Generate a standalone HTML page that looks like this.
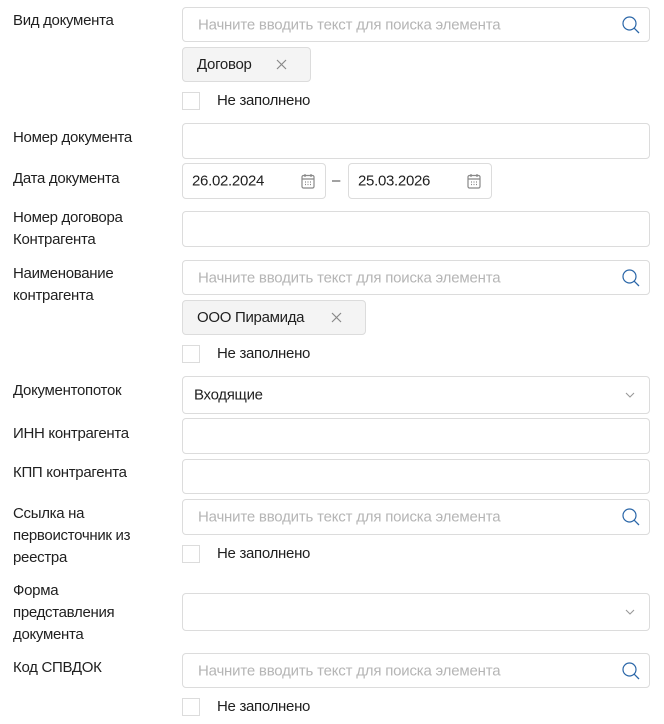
<!DOCTYPE html>
<html><head><meta charset="utf-8"><style>
body{margin:0;width:664px;height:724px;background:#fff;position:relative;overflow:hidden;font-family:"Liberation Sans","DejaVu Sans",sans-serif;color:#1f1f1f;font-size:15px}
.l{position:absolute;left:13px;line-height:22px;letter-spacing:-0.3px}
.b{position:absolute;left:182px;width:466px;border:1px solid #dcdcdc;border-radius:4px;background:#fff}
.ph{position:absolute;left:15px;top:50%;transform:translateY(-50%);color:#b5b5b5;font-size:15px;letter-spacing:-0.2px;white-space:nowrap}
.ic{position:absolute;right:8px;top:50%;transform:translateY(-50%)}
.chip{position:absolute;left:182px;height:33px;border:1px solid #dcdcdc;border-radius:4px;background:#f4f4f4;line-height:33px;padding-left:14px;letter-spacing:-0.3px}
.chip svg{position:absolute;right:23px;top:11px}
.cb{position:absolute;left:182px;width:16px;height:16px;border:1px solid #dcdcdc;background:#fff}
.ct{position:absolute;left:217px;line-height:18px;letter-spacing:-0.3px}
.v{position:absolute;left:9px;top:50%;transform:translateY(-50%);letter-spacing:-0.3px}
</style></head><body>
<svg width="0" height="0" style="position:absolute"><defs>
<symbol id="s" viewBox="0 0 20 20"><circle cx="8.5" cy="8.5" r="6.5" fill="none" stroke="#2a66a8" stroke-width="1.2"/><path d="M13.2 13.2L18 18" stroke="#2a66a8" stroke-width="1.3"/></symbol>
<symbol id="c" viewBox="0 0 14 16"><rect x="1" y="2.5" width="12" height="12.5" rx="1.5" fill="none" stroke="#888" stroke-width="1.2"/><path d="M4 1v3M10 1v3M1 6h12" stroke="#888" stroke-width="1.2"/><path d="M4 9h1M6.5 9h1M9 9h1M4 11.5h1M6.5 11.5h1M9 11.5h1" stroke="#888" stroke-width="1.2"/></symbol>
<symbol id="d" viewBox="0 0 10 6"><path d="M1 1l4 4 4-4" fill="none" stroke="#999" stroke-width="1.1"/></symbol>
<symbol id="x" viewBox="0 0 11 11"><path d="M1 1l9 9M10 1l-9 9" stroke="#888" stroke-width="1.2"/></symbol>
</defs></svg>

<div class="l" style="top:10px">Вид документа</div>
<div class="b" style="top:7px;height:33px"><div class="ph">Начните вводить текст для поиска элемента</div><svg class="ic" width="20" height="20"><use href="#s"/></svg></div>
<div class="chip" style="top:47px;width:113px">Договор<svg width="11" height="11"><use href="#x"/></svg></div>
<div class="cb" style="top:92px"></div><div class="ct" style="top:92px">Не заполнено</div>

<div class="l" style="top:127px">Номер документа</div>
<div class="b" style="top:123px;height:34px"></div>

<div class="l" style="top:168px">Дата документа</div>
<div class="b" style="top:163px;height:34px;width:142px"><div class="v">26.02.2024</div><svg class="ic" style="right:10px" width="14" height="16"><use href="#c"/></svg></div>
<div style="position:absolute;left:332px;top:172px;color:#444">–</div>
<div class="b" style="top:163px;height:34px;width:142px;left:348px"><div class="v">25.03.2026</div><svg class="ic" style="right:10px" width="14" height="16"><use href="#c"/></svg></div>

<div class="l" style="top:207px">Номер договора<br>Контрагента</div>
<div class="b" style="top:211px;height:34px"></div>

<div class="l" style="top:263px">Наименование<br>контрагента</div>
<div class="b" style="top:260px;height:33px"><div class="ph">Начните вводить текст для поиска элемента</div><svg class="ic" width="20" height="20"><use href="#s"/></svg></div>
<div class="chip" style="top:300px;width:168px">ООО Пирамида<svg width="11" height="11"><use href="#x"/></svg></div>
<div class="cb" style="top:345px"></div><div class="ct" style="top:345px">Не заполнено</div>

<div class="l" style="top:380px">Документопоток</div>
<div class="b" style="top:376px;height:36px"><div class="v" style="left:11px">Входящие</div><svg class="ic" style="right:14px" width="10" height="6"><use href="#d"/></svg></div>

<div class="l" style="top:423px">ИНН контрагента</div>
<div class="b" style="top:418px;height:34px"></div>

<div class="l" style="top:462px">КПП контрагента</div>
<div class="b" style="top:459px;height:33px"></div>

<div class="l" style="top:503px">Ссылка на<br>первоисточник из<br>реестра</div>
<div class="b" style="top:499px;height:34px"><div class="ph">Начните вводить текст для поиска элемента</div><svg class="ic" width="20" height="20"><use href="#s"/></svg></div>
<div class="cb" style="top:545px"></div><div class="ct" style="top:545px">Не заполнено</div>

<div class="l" style="top:580px">Форма<br>представления<br>документа</div>
<div class="b" style="top:593px;height:36px"><svg class="ic" style="right:14px" width="10" height="6"><use href="#d"/></svg></div>

<div class="l" style="top:657px">Код СПВДОК</div>
<div class="b" style="top:653px;height:33px"><div class="ph">Начните вводить текст для поиска элемента</div><svg class="ic" width="20" height="20"><use href="#s"/></svg></div>
<div class="cb" style="top:698px"></div><div class="ct" style="top:698px">Не заполнено</div>
</body></html>
